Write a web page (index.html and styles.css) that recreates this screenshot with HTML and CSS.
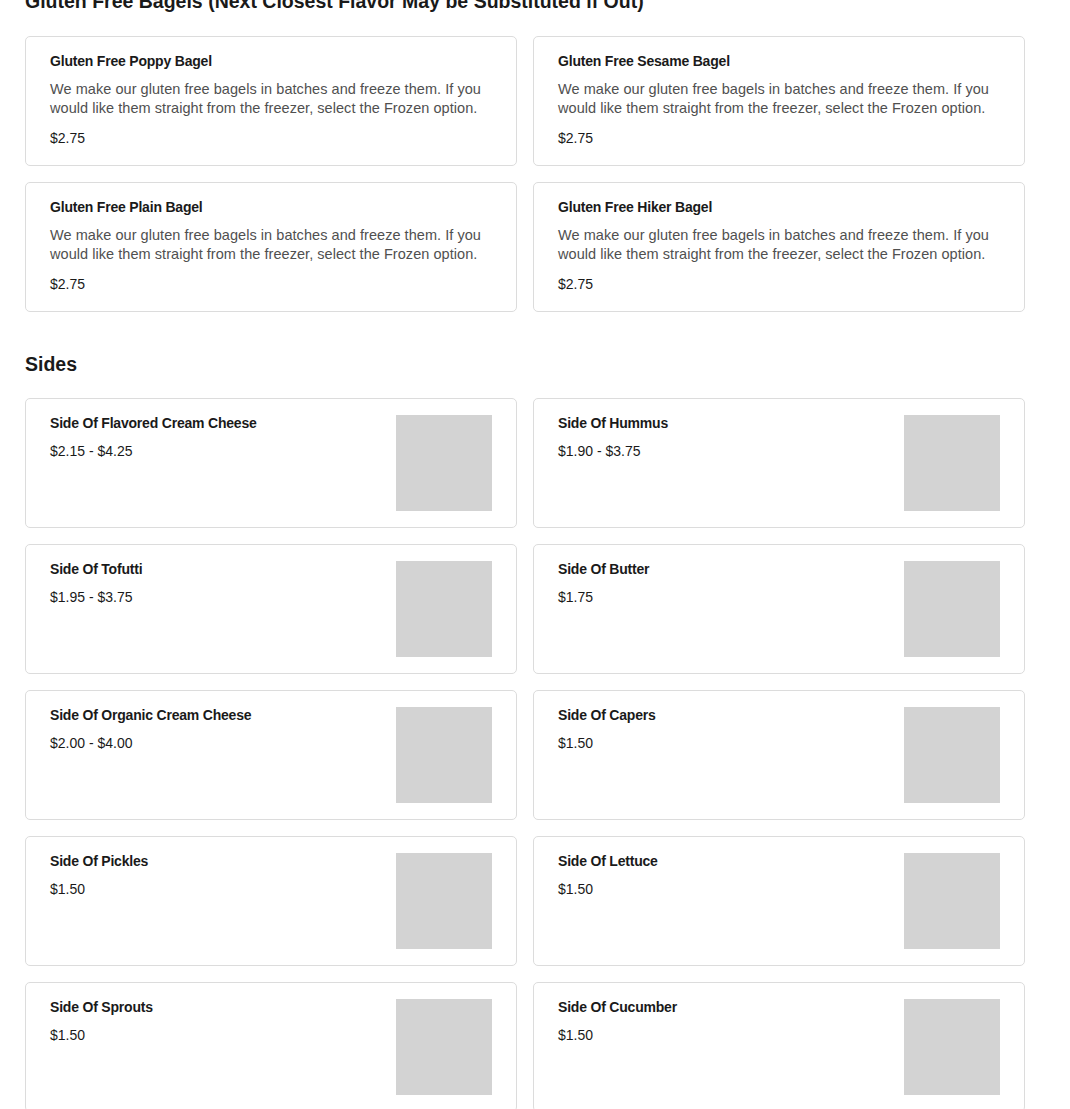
FILE: index.html
```html
<!DOCTYPE html>
<html lang="en">
<head>
<meta charset="utf-8">
<title>Menu</title>
<link rel="stylesheet" href="styles.css">
</head>
<body>
<main class="menu">
  <section class="category category-first">
    <h2 class="category-title">Gluten Free Bagels (Next Closest Flavor May be Substituted if Out)</h2>
    <div class="grid">
      <div class="card">
        <div class="info">
          <div class="name">Gluten Free Poppy Bagel</div>
          <div class="desc">We make our gluten free bagels in batches and freeze them. If you would like them straight from the freezer, select the Frozen option.</div>
          <div class="price">$2.75</div>
        </div>
      </div>
      <div class="card">
        <div class="info">
          <div class="name">Gluten Free Sesame Bagel</div>
          <div class="desc">We make our gluten free bagels in batches and freeze them. If you would like them straight from the freezer, select the Frozen option.</div>
          <div class="price">$2.75</div>
        </div>
      </div>
      <div class="card">
        <div class="info">
          <div class="name">Gluten Free Plain Bagel</div>
          <div class="desc">We make our gluten free bagels in batches and freeze them. If you would like them straight from the freezer, select the Frozen option.</div>
          <div class="price">$2.75</div>
        </div>
      </div>
      <div class="card">
        <div class="info">
          <div class="name">Gluten Free Hiker Bagel</div>
          <div class="desc">We make our gluten free bagels in batches and freeze them. If you would like them straight from the freezer, select the Frozen option.</div>
          <div class="price">$2.75</div>
        </div>
      </div>
    </div>
  </section>

  <section class="category">
    <h2 class="category-title">Sides</h2>
    <div class="grid">
      <div class="card card-img"><div class="info"><div class="name">Side Of Flavored Cream Cheese</div><div class="price">$2.15 - $4.25</div></div><div class="thumb"></div></div>
      <div class="card card-img"><div class="info"><div class="name">Side Of Hummus</div><div class="price">$1.90 - $3.75</div></div><div class="thumb"></div></div>
      <div class="card card-img"><div class="info"><div class="name">Side Of Tofutti</div><div class="price">$1.95 - $3.75</div></div><div class="thumb"></div></div>
      <div class="card card-img"><div class="info"><div class="name">Side Of Butter</div><div class="price">$1.75</div></div><div class="thumb"></div></div>
      <div class="card card-img"><div class="info"><div class="name">Side Of Organic Cream Cheese</div><div class="price">$2.00 - $4.00</div></div><div class="thumb"></div></div>
      <div class="card card-img"><div class="info"><div class="name">Side Of Capers</div><div class="price">$1.50</div></div><div class="thumb"></div></div>
      <div class="card card-img"><div class="info"><div class="name">Side Of Pickles</div><div class="price">$1.50</div></div><div class="thumb"></div></div>
      <div class="card card-img"><div class="info"><div class="name">Side Of Lettuce</div><div class="price">$1.50</div></div><div class="thumb"></div></div>
      <div class="card card-img"><div class="info"><div class="name">Side Of Sprouts</div><div class="price">$1.50</div></div><div class="thumb"></div></div>
      <div class="card card-img"><div class="info"><div class="name">Side Of Cucumber</div><div class="price">$1.50</div></div><div class="thumb"></div></div>
    </div>
  </section>
</main>
</body>
</html>
```
FILE: styles.css
```css
* { box-sizing: border-box; }
html, body { margin: 0; padding: 0; background: #fff; }
body {
  font-family: "Liberation Sans", Arial, sans-serif;
  color: #1a1a1a;
  overflow: hidden;
}
.menu {
  width: 1000px;
  padding-left: 25px;
}
.category-first { margin-top: -13px; }
.category { margin-bottom: 38px; }
.category-title {
  margin: 0 0 20px;
  font-size: 19.5px;
  line-height: 28px;
  font-weight: 700;
  color: #1a1a1a;
}
.category-first .category-title { margin-bottom: 21px; }
.grid {
  display: grid;
  grid-template-columns: 492px 492px;
  gap: 16px;
}
.card {
  border: 1px solid #dcdcdc;
  border-radius: 5px;
  background: #fff;
  padding: 16px 24px;
  height: 130px;
  display: flex;
  gap: 16px;
}
.info { flex: 1; min-width: 0; }
.name {
  font-size: 14px;
  letter-spacing: -0.2px;
  line-height: 16px;
  font-weight: 700;
  color: #1a1a1a;
}
.desc {
  margin-top: 11px;
  font-size: 14.5px;
  letter-spacing: 0.05px;
  line-height: 19px;
  color: #505050;
}
.price {
  margin-top: 10px;
  font-size: 14px;
  line-height: 20px;
  color: #1a1a1a;
}
.thumb {
  width: 96px;
  height: 96px;
  flex: none;
  background: #d3d3d3;
}
```
